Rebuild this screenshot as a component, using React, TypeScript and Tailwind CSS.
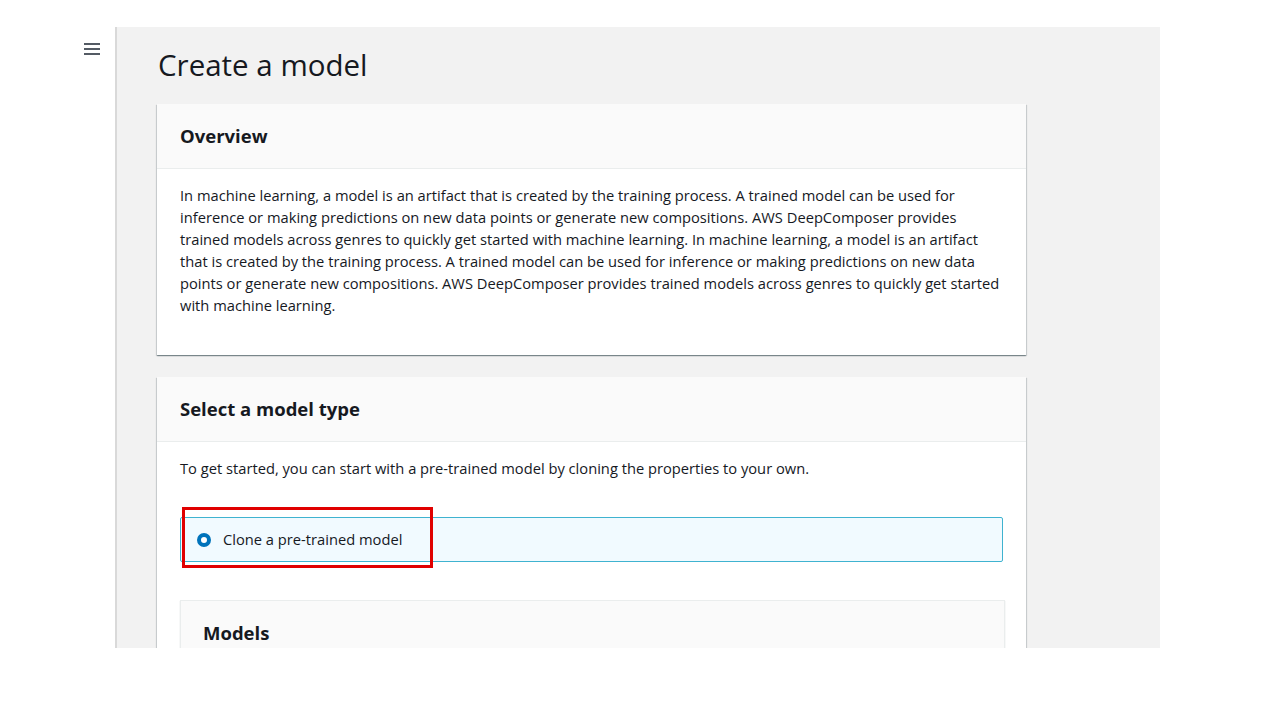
import React from "react";

const font = { fontFamily: '"Open Sans", "Noto Sans", Arial, sans-serif' };

function Card({ title, children, className = "" }: { title: string; children?: React.ReactNode; className?: string }) {
  return (
    <div
      className={`bg-white w-[869px] shadow-[0_1px_1px_0_rgba(0,28,36,0.35),1px_1px_1px_0_rgba(0,28,36,0.12),-1px_1px_1px_0_rgba(0,28,36,0.12)] ${className}`}
    >
      <div className="h-[65px] bg-[#fafafa] border-b border-[#eaeded] flex items-center pl-[23px]">
        <h2 className="text-[18.5px] font-bold text-[#16191f]">{title}</h2>
      </div>
      {children}
    </div>
  );
}

export default function App() {
  return (
    <div className="w-[1280px] h-[720px] bg-white relative overflow-hidden" style={font}>
      <div className="flex pt-[27px]">
        <div className="w-[115px] flex justify-end pr-[15px] pt-[15px]">
          <svg width="16" height="14" viewBox="0 0 16 14">
            <rect x="0" y="1" width="16" height="2" fill="#545b64" />
            <rect x="0" y="6" width="16" height="2" fill="#545b64" />
            <rect x="0" y="11" width="16" height="2" fill="#545b64" />
          </svg>
        </div>
        <div className="w-[1045px] h-[621px] bg-[#f2f2f2] border-l-2 border-[#d9d9d9] overflow-hidden pl-[40px] pt-[20px] relative">
          <h1 className="text-[29.5px] leading-[36px] text-[#16191f] font-normal pl-[1px]">Create a model</h1>
          <div className="mt-[21px]">
            <Card title="Overview">
              <p className="px-[23px] pt-[15px] pb-[39px] text-[14.7px] leading-[22px] text-[#16191f]">
                In machine learning, a model is an artifact that is created by the training process. A trained model can be used for
                <br />
                inference or making predictions on new data points or generate new compositions. AWS DeepComposer provides
                <br />
                trained models across genres to quickly get started with machine learning. In machine learning, a model is an artifact
                <br />
                that is created by the training process. A trained model can be used for inference or making predictions on new data
                <br />
                points or generate new compositions. AWS DeepComposer provides trained models across genres to quickly get started
                <br />
                with machine learning.
              </p>
            </Card>
          </div>
          <div className="mt-[22px]">
            <Card title="Select a model type" className="h-[400px]">
              <div className="px-[23px] pt-[15px]">
                <p className="text-[14.7px] leading-[22px] text-[#16191f]">
                  To get started, you can start with a pre-trained model by cloning the properties to your own.
                </p>
                <div className="mt-[38px] h-[45px] w-[823px] bg-[#f1faff] border border-[#3fb3d0] rounded-[2px] flex items-center pl-[16px] gap-[12px]">
                  <span className="w-[14px] h-[14px] rounded-full border-[4.5px] border-[#0073bb] bg-white" />
                  <span className="text-[14.7px] text-[#16191f]">Clone a pre-trained model</span>
                </div>
                <div className="mt-[38px] w-[825px] h-[100px] bg-[#fafafa] border border-[#eaeded] shadow-[0_1px_1px_0_rgba(0,28,36,0.2)] pl-[22px] pt-[18px]">
                  <h3 className="text-[18.5px] font-bold text-[#16191f] leading-[28px]">Models</h3>
                </div>
              </div>
            </Card>
          </div>
        </div>
      </div>
      <div className="absolute left-[182px] top-[507px] w-[251px] h-[61px] border-[3px] border-[#e00000]" />
    </div>
  );
}
